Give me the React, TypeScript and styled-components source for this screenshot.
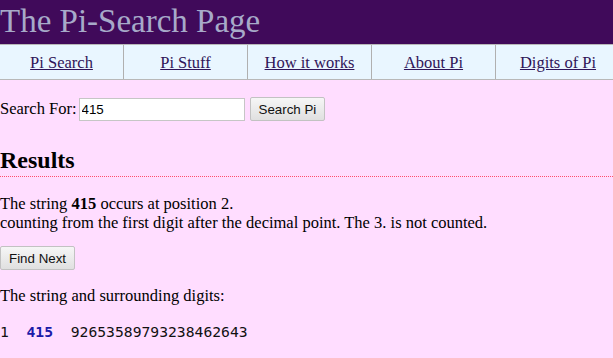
import React from "react";
import styled, { createGlobalStyle } from "styled-components";

const Global = createGlobalStyle`
  html, body { margin: 0; padding: 0; background: #ffddff; overflow: hidden; }
  body { font-family: "Liberation Serif", "Times New Roman", serif; font-size: 16.5px; color: #000; }
`;

const Page = styled.div`
  width: 613px;
  min-height: 358px;
  background: #ffddff;
`;

const Header = styled.header`
  background: #400a5a;
  height: 44px;
  display: flex;
  align-items: center;
`;

const Title = styled.h1`
  margin: 0;
  font-weight: normal;
  font-size: 33px;
  color: #a7aac9;
  line-height: 1;
  padding-bottom: 1px;
`;

const Nav = styled.nav`
  display: grid;
  grid-template-columns: repeat(5, 124px);
  width: 620px;
  background: #e9f6ff;
  border-top: 1px solid #b8b8b8;
  border-bottom: 1px solid #b8b8b8;
  height: 34px;
`;

const NavCell = styled.div<{ $last?: boolean }>`
  display: flex;
  align-items: center;
  justify-content: center;
  border-right: ${(p) => (p.$last ? "none" : "1px solid #b0b0b0")};
`;

const NavLink = styled.a`
  color: #2f1458;
  text-decoration: underline;
  font-size: 16.5px;
  padding-top: 1px;
`;

const Content = styled.main`
  padding-top: 17px;
`;

const SearchRow = styled.form`
  display: flex;
  align-items: center;
  height: 24px;
`;

const Label = styled.label`
  font-size: 16.5px;
  margin-right: 2px;
`;

const Input = styled.input`
  box-sizing: border-box;
  width: 166px;
  height: 23px;
  margin-right: 5px;
  border: 1px solid #c6c6c6;
  padding: 1px 2px;
  font-family: "Liberation Sans", Arial, sans-serif;
  font-size: 13.33px;
  background: #fff;
  outline: none;
`;

const Button = styled.button`
  box-sizing: border-box;
  height: 24px;
  padding: 0 8px;
  border: 1px solid #c2c2c2;
  border-radius: 2px;
  background: linear-gradient(#f6f6f6, #e0e0e0);
  font-family: "Liberation Sans", Arial, sans-serif;
  font-size: 13.33px;
  color: #111;
`;

const Heading = styled.h2`
  margin: 25px 0 0;
  font-size: 24px;
  font-weight: bold;
  line-height: 28px;
  padding-bottom: 2px;
  border-bottom: 1px dotted #ff4d6d;
`;

const Para = styled.p<{ $gap: number }>`
  margin: ${(p) => p.$gap}px 0 0;
  line-height: 19px;
  font-size: 16.5px;
`;

const ButtonRow = styled.div`
  margin-top: 14px;
  height: 24px;
`;

const Digits = styled.div`
  margin-top: 18px;
  font-family: "DejaVu Sans Mono", "Liberation Mono", monospace;
  font-size: 14.7px;
  white-space: pre;
  color: #111;
`;

const Match = styled.b`
  color: #1a1aa8;
`;

const links = ["Pi Search", "Pi Stuff", "How it works", "About Pi", "Digits of Pi"];

export default function App() {
  return (
    <Page>
      <Global />
      <Header>
        <Title>The Pi-Search Page</Title>
      </Header>
      <Nav>
        {links.map((l, i) => (
          <NavCell key={l} $last={i === links.length - 1}>
            <NavLink href="#">{l}</NavLink>
          </NavCell>
        ))}
      </Nav>
      <Content>
        <SearchRow onSubmit={(e) => e.preventDefault()}>
          <Label>Search For:</Label>
          <Input defaultValue="415" />
          <Button type="submit">Search Pi</Button>
        </SearchRow>
        <Heading>Results</Heading>
        <Para $gap={17}>
          The string <b>415</b> occurs at position 2.
          <br />
          counting from the first digit after the decimal point. The 3. is not counted.
        </Para>
        <ButtonRow>
          <Button type="button">Find Next</Button>
        </ButtonRow>
        <Para $gap={16}>The string and surrounding digits:</Para>
        <Digits>
          {"1  "}<Match>415</Match>{"  92653589793238462643"}
        </Digits>
      </Content>
    </Page>
  );
}
